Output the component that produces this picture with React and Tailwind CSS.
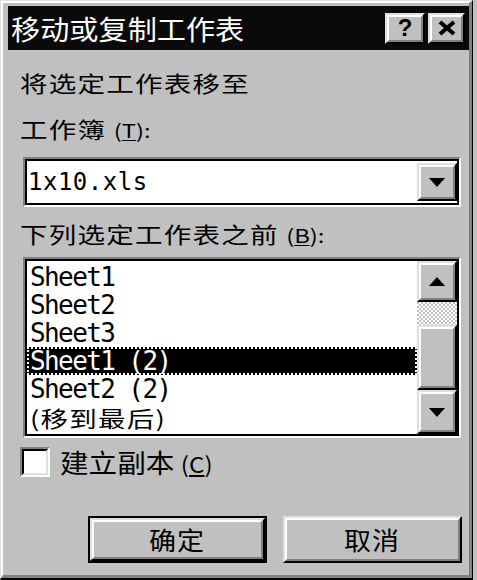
const cjk = "font-['Noto_Sans_CJK_SC',sans-serif]";
const mono = "font-['DejaVu_Sans_Mono',monospace]";

const Raised = ({ className = "", innerClassName = "", children }) => (
  <div className={`border-2 border-t-[#dfdfdf] border-l-[#dfdfdf] border-r-black border-b-black ${className}`}>
    <div
      className={`h-full w-full border-2 border-t-white border-l-white border-r-[#808080] border-b-[#808080] bg-[#c0c0c0] ${innerClassName}`}
    >
      {children}
    </div>
  </div>
);

const Sunken = ({ className = "", innerClassName = "", children }) => (
  <div className={`border-2 border-t-[#808080] border-l-[#808080] border-r-white border-b-white ${className}`}>
    <div className={`h-full w-full border-2 border-black ${innerClassName}`}>{children}</div>
  </div>
);

const Wide = ({ children, className = "" }) => (
  <span className={`${cjk} inline-block origin-left scale-x-[1.25] whitespace-pre text-[22px] leading-[28px] tracking-[1px] text-black ${className}`}>
    {children}
  </span>
);

const ArrowUp = () => (
  <svg width="16" height="9" viewBox="0 0 16 9">
    <polygon points="8,0 16,9 0,9" fill="#000" />
  </svg>
);

const ArrowDown = () => (
  <svg width="16" height="9" viewBox="0 0 16 9">
    <polygon points="0,0 16,0 8,9" fill="#000" />
  </svg>
);

const sheets = ["Sheet1", "Sheet2", "Sheet3", "Sheet1 (2)", "Sheet2 (2)"];

export default function App() {
  return (
    <div className="h-[580px] w-[477px] overflow-hidden bg-[#c0c0c0]">
      <div className="h-[580px] w-[473px] border-t border-l border-r border-b-2 border-t-[#dfdfdf] border-l-[#dfdfdf] border-r-black border-b-black">
        <div className="flex h-full w-full flex-col border-t-2 border-l-2 border-r-[3px] border-b-[3px] border-t-white border-l-white border-r-[#808080] border-b-[#808080] bg-[#c0c0c0]">
          {/* title bar */}
          <div className="ml-[5px] mt-[3px] flex h-[44px] items-center justify-between bg-[#0a0a0a] pl-[3px] pr-[4px]">
            <span className={`${cjk} inline-block origin-left scale-x-[1.08] text-[27px] leading-none tracking-[0px] text-white`}>
              移动或复制工作表
            </span>
            <div className="flex gap-[3px]">
              <Raised className="h-[31px] w-[40px]" innerClassName="flex items-center justify-center">
                <span className="font-['Liberation_Sans',sans-serif] text-[24px] font-bold leading-none text-black">?</span>
              </Raised>
              <Raised className="h-[31px] w-[37px]" innerClassName="flex items-center justify-center">
                <svg width="20" height="16" viewBox="0 0 20 16">
                  <path d="M3 2 L17 14 M17 2 L3 14" stroke="#000" strokeWidth="4" />
                </svg>
              </Raised>
            </div>
          </div>

          {/* body */}
          <div className="flex flex-col pl-[17px]">
            <div className="mt-[18px] h-[28px]">
              <Wide>将选定工作表移至</Wide>
            </div>
            <div className="mt-[18px] h-[28px]">
              <Wide>
                工作簿 <span className="text-[19px] tracking-[0px]">(<span className="underline underline-offset-2">T</span>):</span>
              </Wide>
            </div>

            {/* combobox */}
            <Sunken className="ml-[3px] mt-[15px] h-[50px] w-[438px]" innerClassName="flex items-center bg-white">
              <span className={`${mono} flex-1 pl-[1px] text-[24px] leading-none tracking-[0.5px] text-black`}>
                1x10.xls
              </span>
              <Raised className="h-[38px] w-[40px]" innerClassName="flex items-center justify-center">
                <ArrowDown />
              </Raised>
            </Sunken>

            <div className="mt-[12px] h-[28px]">
              <Wide>
                下列选定工作表之前 <span className="text-[19px] tracking-[0px]">(<span className="underline underline-offset-2">B</span>):</span>
              </Wide>
            </div>

            {/* list box */}
            <Sunken className="ml-[3px] mt-[10px] h-[181px] w-[438px]" innerClassName="flex bg-white">
              <div className="flex flex-1 flex-col overflow-hidden pt-[2px]">
                {sheets.map((s) =>
                  s === "Sheet1 (2)" ? (
                    <div
                      key={s}
                      className={`${mono} h-[28px] shrink-0 whitespace-pre bg-black pl-[3px] text-[26px] leading-[28px] tracking-[-1.6px] text-white outline-2 -outline-offset-2 outline-dotted outline-white`}
                    >
                      {s}
                    </div>
                  ) : (
                    <div
                      key={s}
                      className={`${mono} h-[28px] shrink-0 whitespace-pre pl-[3px] text-[26px] leading-[28px] tracking-[-1.6px] text-black`}
                    >
                      {s}
                    </div>
                  )
                )}
                <div className="h-[28px] shrink-0 pl-[3px]">
                  <Wide>(移到最后)</Wide>
                </div>
              </div>
              <div className="flex w-[40px] flex-col">
                <Raised className="h-[41px] w-[40px]" innerClassName="flex items-center justify-center">
                  <ArrowUp />
                </Raised>
                <div className="h-[23px] w-[40px] bg-[image:repeating-conic-gradient(#ffffff_0%_25%,#c0c0c0_0%_50%)] bg-[length:4px_4px]" />
                <Raised className="h-[65px] w-[40px]" />
                <Raised className="h-[44px] w-[40px]" innerClassName="flex items-center justify-center">
                  <ArrowDown />
                </Raised>
              </div>
            </Sunken>

            {/* checkbox */}
            <div className="mt-[9px] flex h-[30px] items-center gap-[10px]">
              <div className="h-[30px] w-[30px] border-2 border-t-[#808080] border-l-[#808080] border-r-white border-b-white">
                <div className="h-full w-full border-2 border-t-black border-l-black border-r-[#dfdfdf] border-b-[#dfdfdf] bg-white" />
              </div>
              <span className={`${cjk} inline-block origin-left scale-x-[1.1] whitespace-pre text-[26px] leading-none text-black`}>
                建立副本 <span className="text-[22px]">(<span className="underline underline-offset-2">C</span>)</span>
              </span>
            </div>

            {/* buttons */}
            <div className="mr-[7px] mt-[39px] flex justify-end gap-[16px]">
              <div className="h-[47px] w-[179px] border-2 border-black">
                <Raised className="h-full w-full" innerClassName="flex items-center justify-center">
                  <span className={`${cjk} inline-block scale-x-[1.08] text-[25px] leading-none tracking-[1px] text-black`}>确定</span>
                </Raised>
              </div>
              <Raised className="h-[47px] w-[179px]" innerClassName="flex items-center justify-center">
                <span className={`${cjk} inline-block scale-x-[1.08] text-[25px] leading-none tracking-[1px] text-black`}>取消</span>
              </Raised>
            </div>
          </div>
        </div>
      </div>
    </div>
  );
}
